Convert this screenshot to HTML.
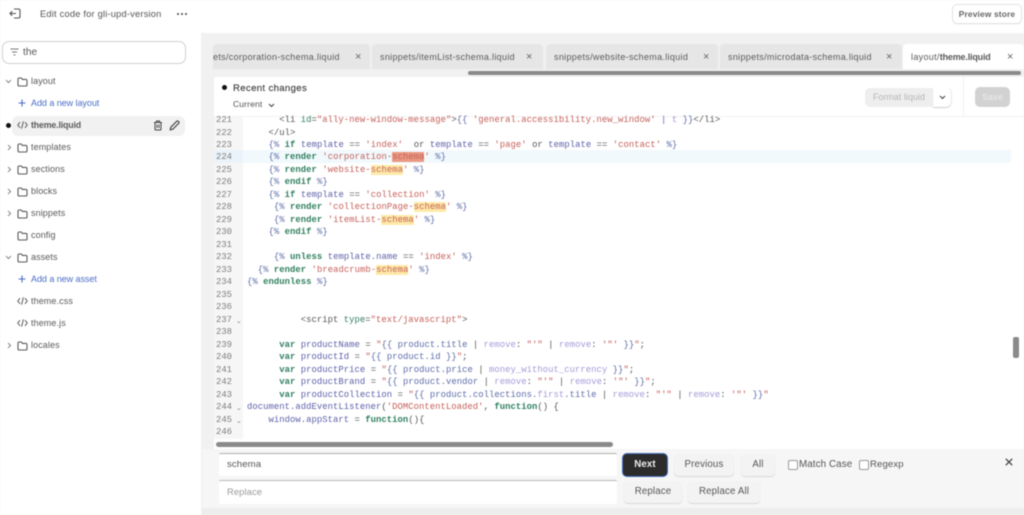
<!DOCTYPE html>
<html><head><meta charset="utf-8">
<style>
html,body{margin:0;padding:0}
body{width:1024px;height:515px;overflow:hidden;background:#f1f1f1;font-family:"Liberation Sans",sans-serif;position:relative;color:#4a4a4a}
#w{position:absolute;left:0;top:0;width:1024px;height:515px;filter:blur(.4px);overflow:hidden}
.a{position:absolute}
.t{position:absolute;font-size:9px;line-height:12px;white-space:pre;letter-spacing:.1px}
.row{position:absolute;left:31px;font-size:9px;line-height:13px;color:#5a5a5a;letter-spacing:.1px}
.blue{color:#4a6fc4;letter-spacing:-.05px}
svg{position:absolute;overflow:visible}
.tab{position:absolute;top:44px;height:25px;background:#e6e6e6;border-radius:4px 4px 0 0;overflow:hidden}
.tab span{position:absolute;top:7px;font-size:9px;line-height:12px;white-space:pre;color:#5a5a5a;letter-spacing:.32px}
.tab b{letter-spacing:-.18px}
.x{position:absolute;top:7px;font-size:11px;line-height:12px;color:#666}
.n{position:absolute;left:216px;width:18px;margin-top:1px;text-align:left;font:8.9px/12.48px "Liberation Mono",monospace;color:#7d7d7d}
.c{position:absolute;left:247px;margin-top:1px;font:8.9px/12.48px "Liberation Mono",monospace;letter-spacing:.05px;white-space:pre;color:#555}
.k{color:#2f7f5f;font-weight:bold}.v{color:#5c5fa8}.s{color:#c5605a}.p{color:#a59ad8}.g{color:#5d6ca8}
.h{background:#fdeaa8}.o{background:#ea9a82}
.btn{position:absolute;background:#f3f3f3;border-radius:4px;box-shadow:0 1px 1px #d8d8d8;font-size:9.7px;line-height:22px;text-align:center;color:#555;letter-spacing:.15px}
.cb{position:absolute;width:8px;height:8px;border:1px solid #999;border-radius:2px;background:#fff}
.fold{position:absolute;left:236px;font-size:7px;line-height:8px;color:#888}
</style></head>
<body><div id="w">
<svg width="0" height="0" style="position:absolute"><defs>
<symbol id="fo" viewBox="0 0 11 10"><path d="M1 2.2Q1 1 2.2 1H4.2L5.4 2.4H8.8Q10 2.4 10 3.6V7.8Q10 9 8.8 9H2.2Q1 9 1 7.8Z" fill="none" stroke="#5a5a5a" stroke-width="1.1"/></symbol>
<symbol id="co" viewBox="0 0 11 10"><path d="M3 2.2L.8 5 3 7.8M8 2.2L10.2 5 8 7.8M6.4 1.4L4.6 8.6" fill="none" stroke="#5a5a5a" stroke-width="1"/></symbol>
</defs></svg>

<!-- top bar -->
<div class="a" style="left:0;top:0;width:1024px;height:33px;background:#fff"></div>
<svg style="left:9px;top:8px" width="12" height="11" viewBox="0 0 12 11"><path d="M5 1H9.5Q11 1 11 2.5V8.5Q11 10 9.5 10H5M1 5.5H7M3.2 3.3L1 5.5 3.2 7.7" fill="none" stroke="#555" stroke-width="1.1"/></svg>
<div class="t" style="left:40px;top:8px;font-size:9.3px;color:#555;letter-spacing:.2px">Edit code for gli-upd-version</div>
<div class="a" style="left:177px;top:13px;width:2px;height:2px;background:#444;border-radius:50%;box-shadow:4px 0 #444,8px 0 #444"></div>
<div class="btn" style="left:953px;top:5px;width:68px;height:18px;line-height:18px;background:#fff;box-shadow:0 0 0 1px #e2e2e2,0 1px 1px #ccc;font-weight:bold;font-size:8.4px;color:#666">Preview store</div>

<!-- sidebar -->
<div class="a" style="left:0;top:33px;width:201px;height:482px;background:#fff"></div>
<div class="a" style="left:2px;top:41px;width:182px;height:21px;border:1px solid #d0d0d0;border-radius:7px;background:#fff"></div>
<svg style="left:10px;top:48px" width="9" height="8" viewBox="0 0 9 8"><path d="M.5 1H8.5M2 4H7M3.5 7H5.5" stroke="#777" stroke-width="1" fill="none"/></svg>
<div class="t" style="left:23px;top:47px;font-size:10px;color:#555">the</div>

<div class="a" style="left:12px;top:116px;width:173px;height:20px;background:#f1f1f1;border-radius:6px"></div>
<div class="a" style="left:6px;top:123px;width:5px;height:5px;background:#111;border-radius:50%"></div>

<svg style="left:5px;top:79px" width="7" height="5" viewBox="0 0 7 5"><path d="M1 1L3.5 3.6 6 1" stroke="#888" fill="none"/></svg>
<svg style="left:17px;top:77px" width="11" height="10"><use href="#fo"/></svg>
<div class="row" style="top:75px">layout</div>
<svg style="left:18px;top:99px" width="8" height="8" viewBox="0 0 8 8"><path d="M4 .5V7.5M.5 4H7.5" stroke="#4a6fc4" stroke-width="1.1"/></svg>
<div class="row blue" style="top:97px">Add a new layout</div>
<svg style="left:17px;top:120px" width="11" height="10"><use href="#co"/></svg>
<div class="row" style="top:119px;font-weight:bold;font-size:8.8px;letter-spacing:-.15px">theme.liquid</div>
<svg style="left:153px;top:120px" width="10" height="11" viewBox="0 0 10 11"><path d="M1 2.5H9M3.5 2.5V1H6.5V2.5M2 2.5V9.2Q2 10 2.8 10H7.2Q8 10 8 9.2V2.5M4 4.5V8M6 4.5V8" fill="none" stroke="#444"/></svg>
<svg style="left:169px;top:120px" width="11" height="11" viewBox="0 0 11 11"><path d="M1.2 9.8L1.8 7.2 7.8 1.2Q8.5.6 9.3 1.3L9.8 1.8Q10.4 2.5 9.8 3.2L3.8 9.2Z" fill="none" stroke="#444" stroke-width="1.1"/></svg>

<svg style="left:7px;top:144px" width="5" height="7" viewBox="0 0 5 7"><path d="M1 1L3.6 3.5 1 6" stroke="#888" fill="none"/></svg>
<svg style="left:17px;top:143px" width="11" height="10"><use href="#fo"/></svg>
<div class="row" style="top:141px">templates</div>
<svg style="left:7px;top:166px" width="5" height="7" viewBox="0 0 5 7"><path d="M1 1L3.6 3.5 1 6" stroke="#888" fill="none"/></svg>
<svg style="left:17px;top:165px" width="11" height="10"><use href="#fo"/></svg>
<div class="row" style="top:163px">sections</div>
<svg style="left:7px;top:188px" width="5" height="7" viewBox="0 0 5 7"><path d="M1 1L3.6 3.5 1 6" stroke="#888" fill="none"/></svg>
<svg style="left:17px;top:187px" width="11" height="10"><use href="#fo"/></svg>
<div class="row" style="top:185px">blocks</div>
<svg style="left:7px;top:210px" width="5" height="7" viewBox="0 0 5 7"><path d="M1 1L3.6 3.5 1 6" stroke="#888" fill="none"/></svg>
<svg style="left:17px;top:209px" width="11" height="10"><use href="#fo"/></svg>
<div class="row" style="top:207px">snippets</div>
<svg style="left:17px;top:231px" width="11" height="10"><use href="#fo"/></svg>
<div class="row" style="top:229px">config</div>
<svg style="left:5px;top:255px" width="7" height="5" viewBox="0 0 7 5"><path d="M1 1L3.5 3.6 6 1" stroke="#888" fill="none"/></svg>
<svg style="left:17px;top:253px" width="11" height="10"><use href="#fo"/></svg>
<div class="row" style="top:251px">assets</div>
<svg style="left:18px;top:275px" width="8" height="8" viewBox="0 0 8 8"><path d="M4 .5V7.5M.5 4H7.5" stroke="#4a6fc4" stroke-width="1.1"/></svg>
<div class="row blue" style="top:273px">Add a new asset</div>
<svg style="left:17px;top:296px" width="11" height="10"><use href="#co"/></svg>
<div class="row" style="top:295px">theme.css</div>
<svg style="left:17px;top:318px" width="11" height="10"><use href="#co"/></svg>
<div class="row" style="top:317px">theme.js</div>
<svg style="left:7px;top:342px" width="5" height="7" viewBox="0 0 5 7"><path d="M1 1L3.6 3.5 1 6" stroke="#888" fill="none"/></svg>
<svg style="left:17px;top:341px" width="11" height="10"><use href="#fo"/></svg>
<div class="row" style="top:339px">locales</div>

<!-- tabs -->
<div class="tab" style="left:213px;width:157px"><span style="left:0">ets/corporation-schema.liquid</span><div class="x" style="left:142px">×</div></div>
<div class="tab" style="left:372px;width:171px"><span style="left:8px">snippets/itemList-schema.liquid</span><div class="x" style="left:154px">×</div></div>
<div class="tab" style="left:546px;width:172px"><span style="left:8px">snippets/website-schema.liquid</span><div class="x" style="left:157px">×</div></div>
<div class="tab" style="left:720px;width:182px"><span style="left:8px">snippets/microdata-schema.liquid</span><div class="x" style="left:166px">×</div></div>
<div class="tab" style="left:903px;width:121px;background:#fff"><span style="left:8px">layout/<b>theme.liquid</b></span><div class="x" style="left:104px">×</div></div>
<div class="a" style="left:468px;top:71px;width:553px;height:4px;background:#8a8a8a;border-radius:2px"></div>

<!-- editor panel -->
<div class="a" style="left:214px;top:77px;width:810px;height:372px;background:#fff"></div>
<div class="a" style="left:222px;top:85px;width:5px;height:5px;background:#111;border-radius:50%"></div>
<div class="t" style="left:233px;top:83px;font-size:9.6px;color:#3f3f3f;letter-spacing:.34px;-webkit-text-stroke:.15px #3f3f3f">Recent changes</div>
<div class="t" style="left:233px;top:98px;font-size:8.6px;color:#555">Current</div>
<svg style="left:268px;top:103px" width="7" height="5" viewBox="0 0 7 5"><path d="M1 1L3.5 3.5 6 1" stroke="#444" stroke-width="1.1" fill="none"/></svg>
<div class="a" style="left:865px;top:88px;width:87px;height:19px;background:#eee;border-radius:5px"></div>
<div class="t" style="left:873px;top:91px;font-size:8.8px;color:#b5b5b5">Format liquid</div>
<div class="a" style="left:933px;top:88px;width:18px;height:19px;background:#fff;border-radius:0 5px 5px 0;box-shadow:0 1px 1px #ccc"></div>
<svg style="left:939px;top:95px" width="7" height="5" viewBox="0 0 7 5"><path d="M1 1L3.5 3.5 6 1" stroke="#444" stroke-width="1.1" fill="none"/></svg>
<div class="a" style="left:963px;top:77px;width:1px;height:39px;background:#f0f0f0"></div>
<div class="a" style="left:975px;top:87px;width:35px;height:20px;background:#d2d2d2;border-radius:5px;color:#e6e6e6;font-size:8.8px;line-height:20px;text-align:center;font-weight:bold">Save</div>
<div class="a" style="left:214px;top:116px;width:810px;height:1px;background:#f2f2f2"></div>

<!-- gutter -->
<div class="a" style="left:214px;top:117px;width:29px;height:322px;background:#f6f6f6"></div>
<div class="a" style="left:214px;top:150px;width:29px;height:12.5px;background:#eaf3fa"></div>
<div class="a" style="left:243px;top:150px;width:768px;height:12.5px;background:#f1f9fd"></div>

<div class="n" style="top:113px">221</div>
<div class="n" style="top:125.5px">222</div>
<div class="n" style="top:138px">223</div>
<div class="n" style="top:150.4px">224</div>
<div class="n" style="top:162.9px">225</div>
<div class="n" style="top:175.4px">226</div>
<div class="n" style="top:187.9px">227</div>
<div class="n" style="top:200.4px">228</div>
<div class="n" style="top:212.8px">229</div>
<div class="n" style="top:225.3px">230</div>
<div class="n" style="top:237.8px">231</div>
<div class="n" style="top:250.3px">232</div>
<div class="n" style="top:262.8px">233</div>
<div class="n" style="top:275.2px">234</div>
<div class="n" style="top:287.7px">235</div>
<div class="n" style="top:300.2px">236</div>
<div class="n" style="top:312.7px">237</div>
<div class="n" style="top:325.2px">238</div>
<div class="n" style="top:337.6px">239</div>
<div class="n" style="top:350.1px">240</div>
<div class="n" style="top:362.6px">241</div>
<div class="n" style="top:375.1px">242</div>
<div class="n" style="top:387.6px">243</div>
<div class="n" style="top:400px">244</div>
<div class="n" style="top:412.5px">245</div>
<div class="n" style="top:425px">246</div>
<div class="fold" style="top:318px">⌄</div>
<div class="fold" style="top:405px">⌄</div>
<div class="fold" style="top:418px">⌄</div>

<div class="c" style="top:113px">      &lt;li <span class="k" style="font-weight:normal">id</span>=<span class="s">"ally-new-window-message"</span>&gt;<span class="g">{{</span> <span class="s">'general.accessibility.new_window'</span> <span class="g">|</span> <span class="p">t</span> <span class="g">}}</span>&lt;/li&gt;</div>
<div class="c" style="top:125.5px">    &lt;/ul&gt;</div>
<div class="c" style="top:138px">    <span class="g">{%</span> <span class="k">if</span> <span class="v">template</span> == <span class="s">'index'</span>  or <span class="v">template</span> == <span class="s">'page'</span> or <span class="v">template</span> == <span class="s">'contact'</span> <span class="g">%}</span></div>
<div class="c" style="top:150.4px">    <span class="g">{%</span> <span class="k">render</span> <span class="s">'corporation-<span class="o">schema</span>'</span> <span class="g">%}</span></div>
<div class="c" style="top:162.9px">    <span class="g">{%</span> <span class="k">render</span> <span class="s">'website-<span class="h">schema</span>'</span> <span class="g">%}</span></div>
<div class="c" style="top:175.4px">    <span class="g">{%</span> <span class="k">endif</span> <span class="g">%}</span></div>
<div class="c" style="top:187.9px">    <span class="g">{%</span> <span class="k">if</span> <span class="v">template</span> == <span class="s">'collection'</span> <span class="g">%}</span></div>
<div class="c" style="top:200.4px">     <span class="g">{%</span> <span class="k">render</span> <span class="s">'collectionPage-<span class="h">schema</span>'</span> <span class="g">%}</span></div>
<div class="c" style="top:212.8px">     <span class="g">{%</span> <span class="k">render</span> <span class="s">'itemList-<span class="h">schema</span>'</span> <span class="g">%}</span></div>
<div class="c" style="top:225.3px">    <span class="g">{%</span> <span class="k">endif</span> <span class="g">%}</span></div>
<div class="c" style="top:250.3px">     <span class="g">{%</span> <span class="k">unless</span> <span class="v">template.name</span> == <span class="s">'index'</span> <span class="g">%}</span></div>
<div class="c" style="top:262.8px">  <span class="g">{%</span> <span class="k">render</span> <span class="s">'breadcrumb-<span class="h">schema</span>'</span> <span class="g">%}</span></div>
<div class="c" style="top:275.2px"><span class="g">{%</span> <span class="k">endunless</span> <span class="g">%}</span></div>
<div class="c" style="top:312.7px">          &lt;script <span class="k" style="font-weight:normal">type</span>=<span class="s">"text/javascript"</span>&gt;</div>
<div class="c" style="top:337.6px">      <span class="k">var</span> <span class="v">productName</span> = <span class="s">"</span><span class="g">{{ product.title</span> | <span class="p">remove</span>: <span class="s">"'"</span> | <span class="p">remove</span>: <span class="s">'"'</span> <span class="g">}}</span><span class="s">"</span>;</div>
<div class="c" style="top:350.1px">      <span class="k">var</span> <span class="v">productId</span> = <span class="s">"</span><span class="g">{{ product.id }}</span><span class="s">"</span>;</div>
<div class="c" style="top:362.6px">      <span class="k">var</span> <span class="v">productPrice</span> = <span class="s">"</span><span class="g">{{ product.price</span> | <span class="p">money_without_currency</span> <span class="g">}}</span><span class="s">"</span>;</div>
<div class="c" style="top:375.1px">      <span class="k">var</span> <span class="v">productBrand</span> = <span class="s">"</span><span class="g">{{ product.vendor</span> | <span class="p">remove</span>: <span class="s">"'"</span> | <span class="p">remove</span>: <span class="s">'"'</span> <span class="g">}}</span><span class="s">"</span>;</div>
<div class="c" style="top:387.6px">      <span class="k">var</span> <span class="v">productCollection</span> = <span class="s">"</span><span class="g">{{ product.collections.<span class="p">first</span>.title</span> | <span class="p">remove</span>: <span class="s">"'"</span> | <span class="p">remove</span>: <span class="s">'"'</span> <span class="g">}}</span><span class="s">"</span></div>
<div class="c" style="top:400px"><span class="v">document.addEventListener</span>(<span class="s">'DOMContentLoaded'</span>, <span class="k">function</span>() {</div>
<div class="c" style="top:412.5px">    <span class="v">window.appStart</span> = <span class="k">function</span>(){</div>

<div class="a" style="left:1013px;top:337px;width:6px;height:21px;background:#8a8a8a;border-radius:2px"></div>
<div class="a" style="left:216px;top:442px;width:397px;height:5px;background:#8a8a8a;border-radius:3px"></div>

<!-- find bar -->
<div class="a" style="left:202px;top:449px;width:822px;height:66px;background:#f6f6f6"></div>
<div class="a" style="left:202px;top:508px;width:822px;height:7px;background:#ededed"></div>
<div class="a" style="left:219px;top:453px;width:398px;height:22px;background:#fff;border-top:1px solid #b0b0b0;border-radius:2px"></div>
<div class="t" style="left:227px;top:459px;font-size:9.6px;color:#555">schema</div>
<div class="a" style="left:219px;top:480px;width:398px;height:23px;background:#fff;border-top:1px solid #b8b8b8;border-radius:2px"></div>
<div class="t" style="left:227px;top:486px;font-size:9.4px;color:#999">Replace</div>
<div class="btn" style="left:623px;top:454px;width:44px;height:22px;background:#2c2c2c;color:#eee;box-shadow:0 0 0 1px #3f6fc0;font-weight:bold">Next</div>
<div class="btn" style="left:674px;top:454px;width:60px;height:22px">Previous</div>
<div class="btn" style="left:741px;top:454px;width:34px;height:22px">All</div>
<div class="cb" style="left:788px;top:460px"></div>
<div class="t" style="left:799px;top:459px;font-size:9.8px;color:#555">Match Case</div>
<div class="cb" style="left:859px;top:460px"></div>
<div class="t" style="left:870px;top:459px;font-size:9.6px;color:#555">Regexp</div>
<svg style="left:1005px;top:458px" width="8" height="8" viewBox="0 0 8 8"><path d="M.8.8L7.2 7.2M7.2.8L.8 7.2" stroke="#444" stroke-width="1.3"/></svg>
<div class="btn" style="left:624px;top:481px;width:58px;height:22px">Replace</div>
<div class="btn" style="left:688px;top:481px;width:72px;height:22px">Replace All</div>
</div></body></html>
